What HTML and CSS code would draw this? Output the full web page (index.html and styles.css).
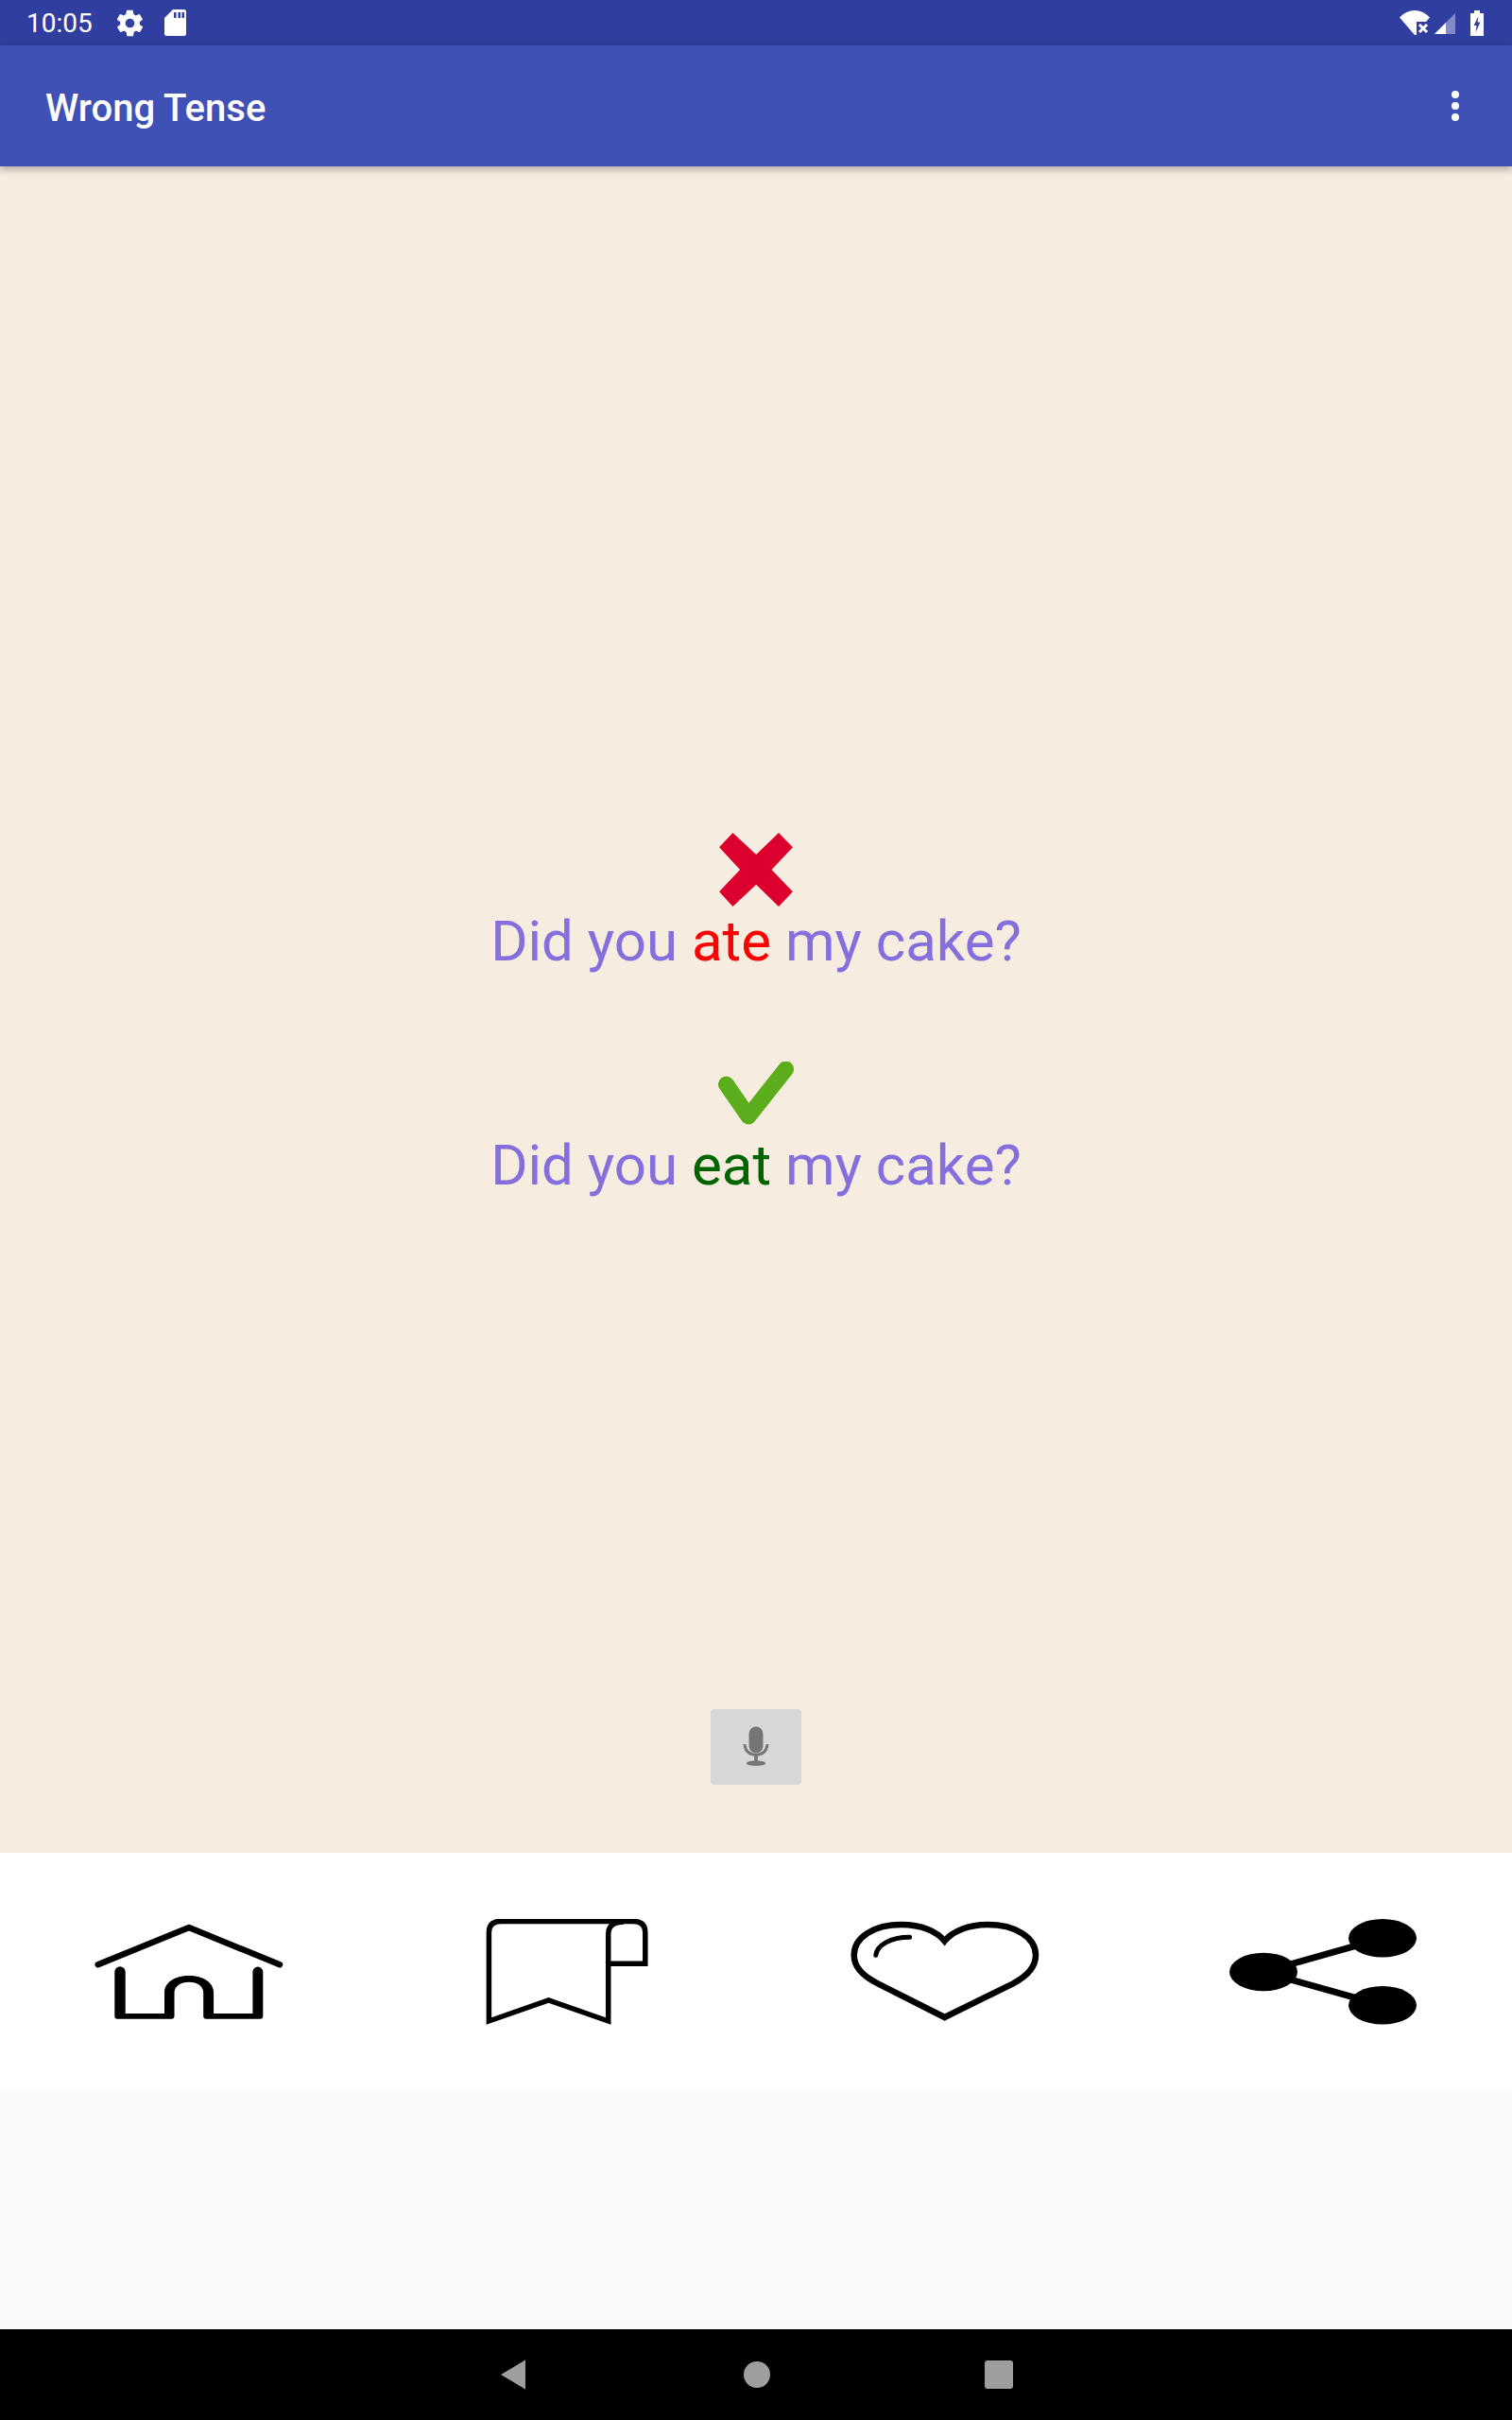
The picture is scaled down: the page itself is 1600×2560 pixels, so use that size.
FILE: index.html

```html
<!DOCTYPE html>
<html>
<head>
    <title>Wrong Tense</title>
    <link rel="stylesheet" href="styles.css">
</head>
<body>
    <div class="status-bar">
        <span class="clock">10:05</span>
        <svg class="gear" viewBox="0 0 24 24"><path d="M19.4 13c.1-.3.1-.7.1-1s0-.7-.1-1l2.1-1.6c.2-.2.2-.4.1-.6l-2-3.5c-.1-.2-.4-.3-.6-.2l-2.500 1c-.5-.4-1.100-.7-1.700-1l-.4-2.600c0-.3-.2-.5-.5-.5h-4c-.3 0-.5.2-.5.4l-.4 2.700c-.6.2-1.200.6-1.700 1l-2.500-1c-.2-.1-.5 0-.6.2l-2 3.500c-.1.2-.1.5.1.6L4.600 11c0 .3-.1.7-.1 1s0 .7.1 1l-2.100 1.600c-.2.2-.2.4-.1.6l2 3.500c.1.2.4.3.6.2l2.500-1c.5.4 1.100.7 1.700 1l.4 2.600c0 .3.2.5.5.5h4c.3 0 .5-.2.5-.4l.4-2.700c.6-.2 1.200-.6 1.700-1l2.500 1c.2.1.5 0 .6-.2l2-3.500c.1-.2.1-.5-.1-.6L19.400 13zM12 15.500c-1.900 0-3.500-1.600-3.500-3.500s1.600-3.500 3.500-3.500 3.500 1.600 3.500 3.500-1.600 3.500-3.500 3.500z"/></svg>
        <svg class="sd" viewBox="0 0 23 28"><path fill-rule="evenodd" d="M9 0H20.500Q23 0 23 2.500V25.500Q23 28 20.500 28H2.500Q0 28 0 25.500V9ZM10 3V9H12.500V3ZM14.500 3V9H17V3ZM18.500 3V9H21V3Z"/></svg>
        <span class="status-right">
            <svg class="wifi" viewBox="0 0 32 26"><path d="M0 7.500C4 3 10 0 16 0S28 3 32 7.500L28 12H18V26H16Z"/><path class="wifi-x" d="M21 15L29 23M29 15L21 23"/></svg>
            <svg class="signal" viewBox="0 0 22 22"><path class="signal-dim" d="M22 0V22H0Z"/><path d="M12 10V22H0Z"/></svg>
            <svg class="battery" viewBox="0 0 14 27"><path fill-rule="evenodd" d="M4 0H10V3H14V27H0V3H4ZM8.500 6L3.500 16H6.500L5.500 23L10.500 12.500H7.500Z"/></svg>
        </span>
    </div>

    <div class="app-bar">
        <span class="app-title">Wrong Tense</span>
        <svg class="overflow" viewBox="0 0 8 32"><circle cx="4" cy="4" r="4"/><circle cx="4" cy="16" r="4"/><circle cx="4" cy="28" r="4"/></svg>
    </div>

    <div class="main">
        <svg class="mark-wrong" viewBox="0 0 78.500 78.700"><path d="M14.500 0L0 15.300L22.200 39.300L0 62.700L14.500 78.700L39.400 55.300L63.500 78.700L78.500 62.700L55.900 39.300L78.500 15.300L63.500 0L39.400 23.300Z"/></svg>
        <div class="sentence">Did you <span class="wrong">ate</span> my cake?</div>
        <svg class="mark-right" viewBox="0 0 80 67"><path d="M8.500 24L32 58L71.500 8"/></svg>
        <div class="sentence sentence-right">Did you <span class="right">eat</span> my cake?</div>
        <div class="mic-button">
            <svg viewBox="0 0 30 46"><rect x="7" y="0" width="16" height="30" rx="8"/><path class="mic-arm" d="M2 20C3 29 8 32 15 32S27 29 28 20"/><rect x="13" y="32" width="4" height="8"/><ellipse cx="15" cy="41.500" rx="11" ry="3"/></svg>
        </div>
    </div>

    <div class="bottom-icons">
        <div class="icon-cell">
            <svg viewBox="0 0 200 112"><path class="roof" d="M3.700 48.300L100 9L196 48.300"/><path d="M21.300 56a5.700 5.700 0 0 1 11.400 0V100H74V78C74 67 85 60 100 60S126.100 67 126.100 78V100H167.400V56a5.450 5.450 0 0 1 10.900 0V102.700q0 3-3 3H118.200q-3 0-3-3V78C115.200 71 109 66.700 100 66.700S84.500 71 84.500 78V102.700q0 3-3 3H24.300q-3 0-3-3Z"/></svg>
        </div>
        <div class="icon-cell">
            <svg viewBox="0 0 200 112"><path class="outline" d="M17.400 108V14Q17.400 2.500 30 2.500H170Q182.800 2.500 182.800 14V47.300H143.700V108L80.500 86L17.400 108Z"/><path class="outline" d="M143.700 47V16Q143.700 3 160 3"/></svg>
        </div>
        <div class="icon-cell">
            <svg viewBox="0 0 200 112"><path class="outline heart" d="M99.600 23.300C91 13 75 6 54 6C25 6 3.700 19 3.700 38.300C3.700 52 14 61 29 68.300L99.600 104L172 68.300C186 61 196 52 196 38.300C196 19 174 6 145 6C125 6 108 13 99.600 23.300Z"/><path class="shine" d="M26.800 38.300C28 28 42 19.300 62.600 19.300"/></svg>
        </div>
        <div class="icon-cell">
            <svg viewBox="0 0 200 112"><path class="share-line" d="M163 20.300L37 56L163 91.300"/><ellipse cx="163" cy="20.300" rx="36" ry="20.300"/><ellipse cx="37" cy="56" rx="36" ry="20.300"/><ellipse cx="163" cy="91.300" rx="36" ry="20.300"/></svg>
        </div>
    </div>

    <div class="empty-area"></div>

    <div class="nav-bar">
        <svg class="nav-back" viewBox="0 0 28 32"><path d="M27 0.500V31.500L1 16Z"/></svg>
        <span class="nav-home"></span>
        <span class="nav-recent"></span>
    </div>
</body>
</html>
```

FILE: styles.css

```css
html, body {
    margin: 0;
    padding: 0;
}
body {
    width: 1600px;
    height: 2560px;
    display: flex;
    flex-direction: column;
    overflow: hidden;
    font-family: 'Roboto', 'Liberation Sans', sans-serif;
    background-color: #fafafa;
}
svg {
    display: block;
}
.status-bar {
    height: 48px;
    flex: none;
    display: flex;
    align-items: center;
    background-color: #303f9f;
    color: #fff;
    fill: #fff;
    padding-left: 28px;
    padding-right: 30px;
}
.clock {
    font-size: 28px;
    line-height: 48px;
    padding-top: 2px;
    width: 93px;
}
.gear {
    width: 33px;
    height: 33px;
    margin-right: 20px;
}
.sd {
    width: 23px;
    height: 28px;
}
.status-right {
    margin-left: auto;
    display: flex;
    align-items: center;
}
.wifi {
    width: 32px;
    height: 26px;
}
.wifi-x {
    fill: none;
    stroke: #fff;
    stroke-width: 3;
}
.signal {
    width: 22px;
    height: 22px;
    margin-left: 5px;
    margin-top: 2px;
}
.signal-dim {
    opacity: 0.4;
}
.battery {
    width: 14px;
    height: 27px;
    margin-left: 16px;
}
.app-bar {
    height: 128px;
    flex: none;
    display: flex;
    align-items: center;
    justify-content: space-between;
    background-color: #3f51b5;
    color: #fff;
    fill: #fff;
    padding-left: 48px;
    padding-right: 56px;
    box-shadow: 0 3px 8px rgba(0, 0, 0, 0.3);
    position: relative;
}
.app-title {
    font-size: 40px;
    font-weight: 500;
    padding-top: 5px;
}
.overflow {
    width: 8px;
    height: 32px;
}
.main {
    height: 1784px;
    flex: none;
    box-sizing: border-box;
    padding-top: 705px;
    padding-bottom: 72px;
    display: flex;
    flex-direction: column;
    align-items: center;
    background-color: #f6ece0;
}
.mark-wrong {
    width: 78px;
    height: 78px;
    fill: #dc002e;
}
.mark-right {
    width: 80px;
    height: 67px;
    margin-top: 92px;
    fill: none;
    stroke: #5cad1c;
    stroke-width: 17;
    stroke-linecap: round;
    stroke-linejoin: round;
}
.sentence {
    font-size: 60px;
    line-height: 70px;
    height: 70px;
    margin-top: 2px;
    color: #846fdd;
    white-space: nowrap;
}
.sentence-right {
    margin-top: 8px;
}
.wrong {
    color: #f00;
}
.right {
    color: #006400;
}
.mic-button {
    width: 96px;
    height: 80px;
    margin-top: auto;
    display: flex;
    align-items: center;
    justify-content: center;
    background-color: #d6d7d7;
    border-radius: 4px;
}
.mic-button svg {
    width: 28px;
    height: 44px;
    fill: #757575;
}
.mic-arm {
    fill: none;
    stroke: #757575;
    stroke-width: 3;
}
.bottom-icons {
    height: 252px;
    flex: none;
    display: grid;
    grid-template-columns: repeat(4, 400px);
    align-items: center;
    background-color: #fff;
}
.icon-cell {
    display: flex;
    justify-content: center;
}
.icon-cell svg {
    width: 200px;
    height: 112px;
    fill: #000;
}
.roof {
    fill: none;
    stroke: #000;
    stroke-width: 6.500;
    stroke-linecap: round;
    stroke-linejoin: round;
}
.outline {
    fill: none;
    stroke: #000;
    stroke-width: 5.500;
}
.heart {
    stroke-width: 6.500;
}
.shine {
    fill: none;
    stroke: #000;
    stroke-width: 5;
    stroke-linecap: round;
}
.share-line {
    fill: none;
    stroke: #000;
    stroke-width: 7;
}
.empty-area {
    height: 252px;
    flex: none;
}
.nav-bar {
    height: 96px;
    flex: none;
    background-color: #000;
    display: flex;
    align-items: center;
    justify-content: center;
}
.nav-back {
    width: 28px;
    height: 32px;
    fill: #9e9e9e;
}
.nav-home {
    width: 28px;
    height: 28px;
    margin-left: 230px;
    border-radius: 50%;
    background-color: #9e9e9e;
}
.nav-recent {
    width: 30px;
    height: 30px;
    margin-left: 227px;
    border-radius: 3px;
    background-color: #9e9e9e;
}
```
